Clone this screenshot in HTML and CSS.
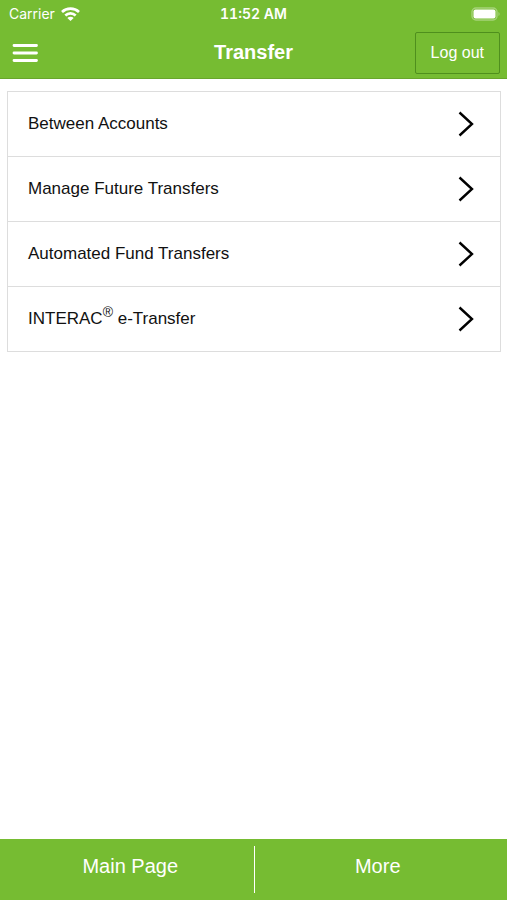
FILE: index.html
```html
<!DOCTYPE html>
<html lang="en">
<head>
<meta charset="utf-8">
<meta name="viewport" content="width=device-width, initial-scale=1">
<title>Transfer</title>
<link rel="stylesheet" href="styles.css">
</head>
<body>
<header class="top">
  <div class="status">
    <div class="carrier">
      <span>Carrier</span>
      <svg class="wifi" viewBox="0 0 19 14" aria-hidden="true">
        <path d="M1 5C5.600.5 13.400.5 18 5M4.300 8.500c3-2.900 7.400-2.900 10.400 0" fill="none" stroke="#fff" stroke-width="2.600"/>
        <path d="M9.500 14 6.300 10.900c1.900-1.600 4.500-1.600 6.400 0z" fill="#fff"/>
      </svg>
    </div>
    <span class="time">11:52 AM</span>
    <svg class="battery" viewBox="0 0 29 14" aria-hidden="true">
      <rect x="1" y="1" width="25" height="12" rx="4" fill="none" stroke="#fff" stroke-width="1.400" stroke-opacity=".35"/>
      <rect x="2.500" y="2.500" width="22" height="9" rx="2" fill="#fff"/>
      <path d="M27.500 5c1.400.5 1.400 3.500 0 4z" fill="#fff" fill-opacity=".4"/>
    </svg>
  </div>
  <div class="nav">
    <button class="menu" type="button" aria-label="Menu">
      <svg viewBox="0 0 26 20" aria-hidden="true">
        <path d="M2 2.500h22.500M2 10h22.500M2 17.500h22.500" stroke="#fff" stroke-width="2.800" stroke-linecap="round"/>
      </svg>
    </button>
    <h1 class="title">Transfer</h1>
    <button class="logout" type="button">Log out</button>
  </div>
</header>
<main class="content">
  <ul class="list">
    <li><a class="row" href="#between"><span>Between Accounts</span><svg class="chevron" viewBox="0 0 16 26" aria-hidden="true"><path d="M1.500 1.500 14 13 1.500 24.500"/></svg></a></li>
    <li><a class="row" href="#future"><span>Manage Future Transfers</span><svg class="chevron" viewBox="0 0 16 26" aria-hidden="true"><path d="M1.500 1.500 14 13 1.500 24.500"/></svg></a></li>
    <li><a class="row" href="#automated"><span>Automated Fund Transfers</span><svg class="chevron" viewBox="0 0 16 26" aria-hidden="true"><path d="M1.500 1.500 14 13 1.500 24.500"/></svg></a></li>
    <li><a class="row" href="#interac"><span>INTERAC<sup>®</sup> e-Transfer</span><svg class="chevron" viewBox="0 0 16 26" aria-hidden="true"><path d="M1.500 1.500 14 13 1.500 24.500"/></svg></a></li>
  </ul>
</main>
<nav class="bottom">
  <a class="tab" href="#main">Main Page</a>
  <a class="tab" href="#more">More</a>
</nav>
</body>
</html>
```
FILE: styles.css
```css
* {
  box-sizing: border-box;
}

body {
  margin: 0;
  min-height: 100vh;
  display: flex;
  flex-direction: column;
  background: #fff;
  color: #111;
  font-family: "Liberation Sans", Arial, sans-serif;
  font-size: 17px;
}

a {
  color: inherit;
  text-decoration: none;
}

button {
  font: inherit;
  color: inherit;
  background: none;
  cursor: pointer;
}

svg {
  display: block;
}

.top {
  background: #76bc32;
  border-bottom: 1px solid #68a62c;
  color: #fff;
}

.status,
.nav {
  display: grid;
  grid-template-columns: 1fr auto 1fr;
  align-items: center;
  padding: 0 7px;
}

.status {
  height: 27px;
  font-family: Inter, "Liberation Sans", sans-serif;
  font-size: 14px;
}

.carrier {
  display: flex;
  align-items: center;
  gap: 6px;
  padding-left: 2px;
}

.wifi {
  width: 19px;
  height: 14px;
}

.time {
  font-weight: 600;
  font-variant-numeric: tabular-nums;
}

.battery {
  width: 29px;
  height: 14px;
  justify-self: end;
}

.nav {
  height: 51px;
}

.menu {
  width: 26px;
  margin-left: 5px;
  padding: 0;
  border: 0;
}

.title {
  margin: 0;
  font-size: 20px;
  font-weight: 700;
}

.logout {
  justify-self: end;
  height: 42px;
  padding: 0 15px;
  border: 1px solid #4f8f1d;
  border-radius: 2px;
  font-size: 16px;
}

.content {
  flex: 1;
  padding: 12px 6px 12px 7px;
}

.list {
  margin: 0;
  padding: 0;
  list-style: none;
  border: 1px solid #ddd;
}

.list li + li {
  border-top: 1px solid #ddd;
}

.row {
  display: flex;
  align-items: center;
  justify-content: space-between;
  height: 64px;
  padding: 0 26px 0 20px;
}

.row sup {
  font-size: 14px;
  line-height: 0;
}

.chevron {
  width: 16px;
  height: 26px;
  fill: none;
  stroke: #000;
  stroke-width: 2.400;
}

.bottom {
  display: flex;
  height: 61px;
  padding: 7px 6px 7px 7px;
  background: #76bc32;
  color: #fff;
  font-size: 20px;
}

.tab {
  flex: 1;
  display: flex;
  align-items: center;
  justify-content: center;
  padding-bottom: 6px;
}

.tab + .tab {
  border-left: 1px solid #fff;
}
```
